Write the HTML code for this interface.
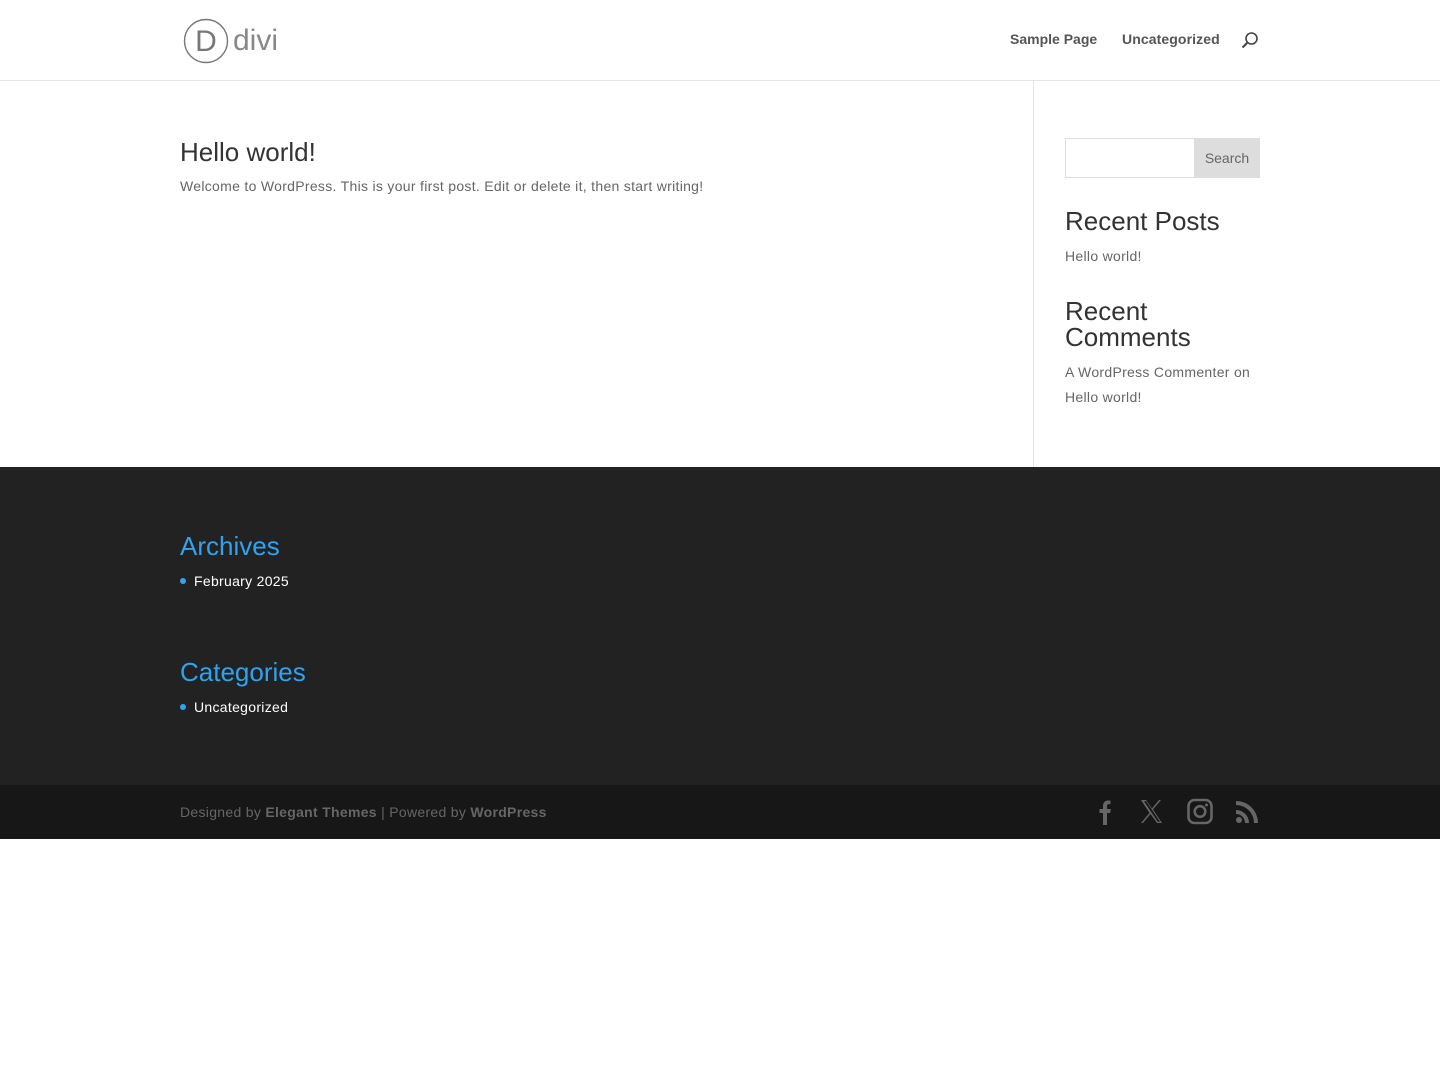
<!DOCTYPE html>
<html><head><style>
*{margin:0;padding:0;box-sizing:border-box}
body{width:1440px;height:1080px;background:#fff;font-family:"Liberation Sans",sans-serif;color:#666;position:relative}
.a{position:absolute;white-space:nowrap}
.t{letter-spacing:0.3px}
</style></head><body>
<div class="a" style="left:0;top:0;width:1440px;height:81px;border-bottom:1px solid #e5e5e5"></div>
<svg class="a" style="left:183px;top:18px" width="46" height="46"><circle cx="23" cy="23" r="21.5" fill="none" stroke="#777" stroke-width="1.4"/><text x="23" y="33" text-anchor="middle" font-family="Liberation Sans" font-size="30" fill="#777">D</text></svg>
<div class="a" style="left:233px;top:24px;font-size:30px;color:#888;letter-spacing:0px">divi</div>
<div class="a" style="left:1010px;top:31px;font-size:14px;font-weight:bold;color:#555">Sample Page</div>
<div class="a" style="left:1122px;top:31px;font-size:14px;font-weight:bold;color:#555;letter-spacing:0.1px">Uncategorized</div>
<svg class="a" style="left:1241px;top:31px" width="18" height="18"><circle cx="10.5" cy="7.5" r="5.5" fill="none" stroke="#444" stroke-width="1.6"/><path d="M6.5 11.5L1.5 16.5" stroke="#444" stroke-width="2"/></svg>
<div class="a" style="left:1033px;top:81px;width:1px;height:386px;background:#e5e5e5"></div>
<div class="a" style="left:180px;top:137px;font-size:26px;color:#333">Hello world!</div>
<div class="a t" style="left:180px;top:178px;font-size:14px">Welcome to WordPress. This is your first post. Edit or delete it, then start writing!</div>
<div class="a" style="left:1065px;top:138px;width:130px;height:40px;border:1px solid #ddd"></div>
<div class="a" style="left:1194px;top:138px;width:66px;height:40px;background:#ddd;font-size:14px;color:#666;text-align:center;line-height:40px">Search</div>
<div class="a" style="left:1065px;top:206px;font-size:26px;color:#333">Recent Posts</div>
<div class="a t" style="left:1065px;top:248px;font-size:14px">Hello world!</div>
<div class="a" style="left:1065px;top:298px;font-size:26px;color:#333;line-height:26px;white-space:normal;width:200px">Recent Comments</div>
<div class="a t" style="left:1065px;top:360px;font-size:14px;line-height:25px;white-space:normal;width:200px">A WordPress Commenter on Hello world!</div>
<div class="a" style="left:0;top:467px;width:1440px;height:318px;background:#222"></div>
<div class="a" style="left:180px;top:531px;font-size:26px;color:#2ea3f2">Archives</div>
<div class="a" style="left:180px;top:578px;width:6px;height:6px;border-radius:3px;background:#2ea3f2"></div>
<div class="a t" style="left:194px;top:573px;font-size:14px;color:#fff">February 2025</div>
<div class="a" style="left:180px;top:657px;font-size:26px;color:#2ea3f2">Categories</div>
<div class="a" style="left:180px;top:704px;width:6px;height:6px;border-radius:3px;background:#2ea3f2"></div>
<div class="a t" style="left:194px;top:699px;font-size:14px;color:#fff">Uncategorized</div>
<div class="a" style="left:0;top:785px;width:1440px;height:54px;background:#171717"></div>
<div class="a t" style="left:180px;top:804px;font-size:14px;color:#666">Designed by <b>Elegant Themes</b> | Powered by <b>WordPress</b></div>
<svg class="a" style="left:1095px;top:798px" width="170" height="28" fill="#666">
<path d="M8 27V15H4.5v-4H8V8c0-3.5 2-5.5 5-5.5 1.3 0 2.5.1 2.5.1v3.5H14c-1.5 0-2 .8-2 2V11h3.8l-.6 4H12v12z"/>
<path d="M46 2h5l6 8.5L64 2h2l-8 9.5L67 25h-5l-6.5-9L48 25h-2l8.5-10z M49 3.3l13.8 20.4h2.2L51.2 3.3z" fill-rule="evenodd"/>
<rect x="93.5" y="2" width="23" height="23" rx="6" fill="none" stroke="#666" stroke-width="2.6"/><circle cx="105" cy="13.5" r="5.3" fill="none" stroke="#666" stroke-width="2.6"/><circle cx="111.5" cy="7" r="1.5"/>
<circle cx="144" cy="22" r="3"/><path d="M141 12a13 13 0 0 1 13 13h-4a9 9 0 0 0-9-9z M141 3a22 22 0 0 1 22 22h-4a18 18 0 0 0-18-18z"/>
</svg>
</body></html>
